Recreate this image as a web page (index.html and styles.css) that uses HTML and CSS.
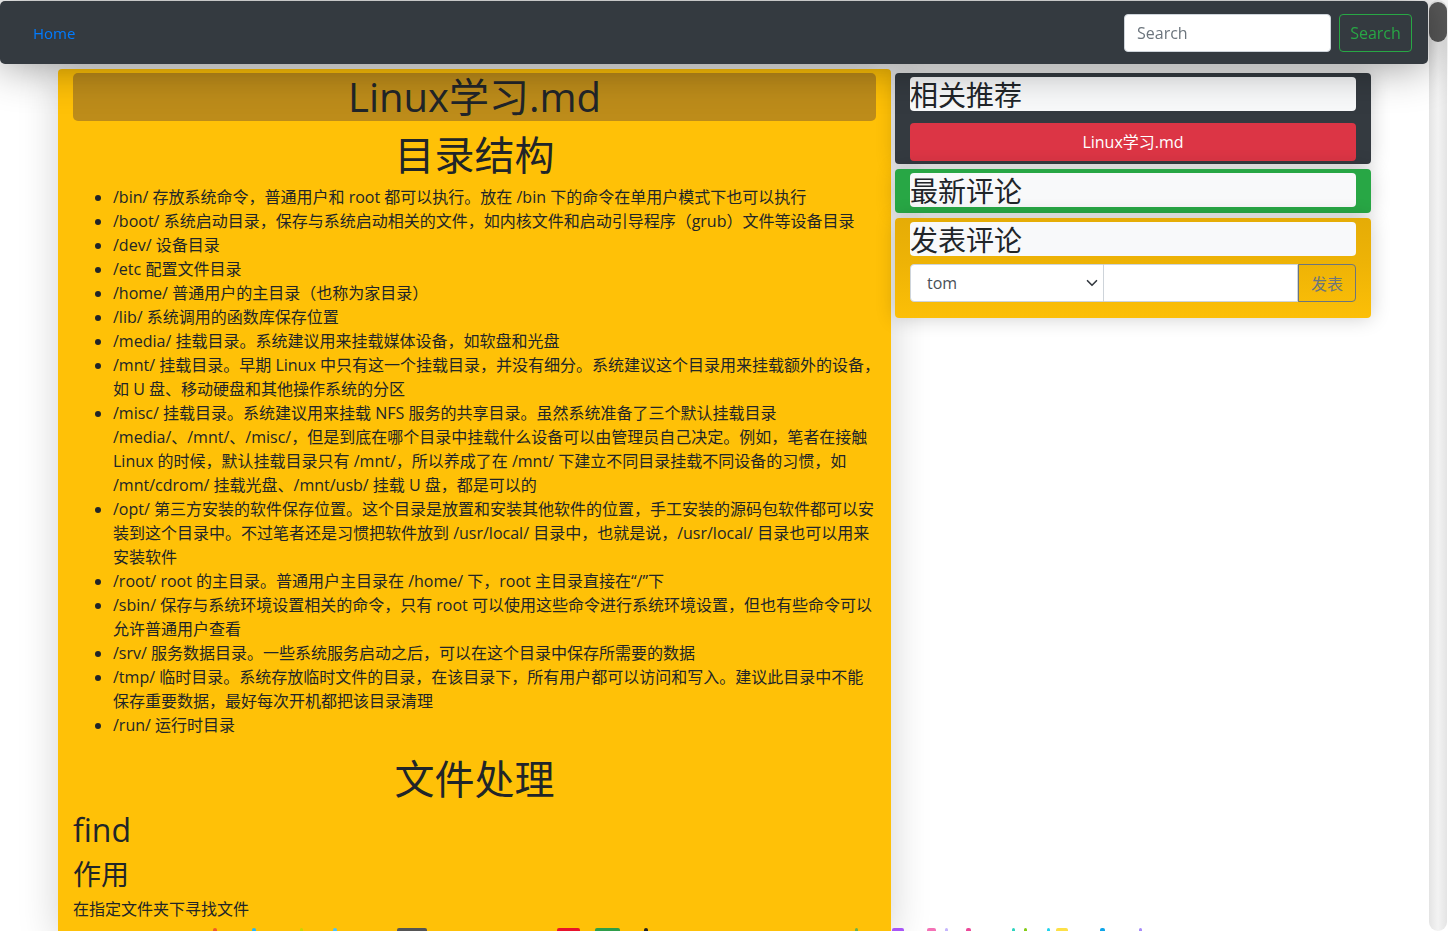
FILE: index.html
```html
<!DOCTYPE html>
<html lang="zh-CN">
<head>
<meta charset="utf-8">
<title>Linux学习.md</title>
<link rel="stylesheet" href="styles.css">
</head>
<body>
<nav class="navbar">
  <a class="home" href="#">Home</a>
  <form class="search">
    <input class="search-input" type="text" placeholder="Search">
    <button class="search-btn" type="button">Search</button>
  </form>
</nav>

<div class="layout">
  <main class="article">
    <h1 class="doc-title">Linux学习.md</h1>
    <h1 class="sec">目录结构</h1>
    <ul class="dirs">
      <li>/bin/ 存放系统命令，普通用户和 root 都可以执行。放在 /bin 下的命令在单用户模式下也可以执行</li>
      <li>/boot/ 系统启动目录，保存与系统启动相关的文件，如内核文件和启动引导程序（grub）文件等设备目录</li>
      <li>/dev/ 设备目录</li>
      <li>/etc 配置文件目录</li>
      <li>/home/ 普通用户的主目录（也称为家目录）</li>
      <li>/lib/ 系统调用的函数库保存位置</li>
      <li>/media/ 挂载目录。系统建议用来挂载媒体设备，如软盘和光盘</li>
      <li>/mnt/ 挂载目录。早期 Linux 中只有这一个挂载目录，并没有细分。系统建议这个目录用来挂载额外的设备，<br>如 U 盘、移动硬盘和其他操作系统的分区</li>
      <li>/misc/ 挂载目录。系统建议用来挂载 NFS 服务的共享目录。虽然系统准备了三个默认挂载目录<br>/media/、/mnt/、/misc/，但是到底在哪个目录中挂载什么设备可以由管理员自己决定。例如，笔者在接触<br>Linux 的时候，默认挂载目录只有 /mnt/，所以养成了在 /mnt/ 下建立不同目录挂载不同设备的习惯，如<br>/mnt/cdrom/ 挂载光盘、/mnt/usb/ 挂载 U 盘，都是可以的</li>
      <li>/opt/ 第三方安装的软件保存位置。这个目录是放置和安装其他软件的位置，手工安装的源码包软件都可以安<br>装到这个目录中。不过笔者还是习惯把软件放到 /usr/local/ 目录中，也就是说，/usr/local/ 目录也可以用来<br>安装软件</li>
      <li>/root/ root 的主目录。普通用户主目录在 /home/ 下，root 主目录直接在“/”下</li>
      <li>/sbin/ 保存与系统环境设置相关的命令，只有 root 可以使用这些命令进行系统环境设置，但也有些命令可以<br>允许普通用户查看</li>
      <li>/srv/ 服务数据目录。一些系统服务启动之后，可以在这个目录中保存所需要的数据</li>
      <li>/tmp/ 临时目录。系统存放临时文件的目录，在该目录下，所有用户都可以访问和写入。建议此目录中不能<br>保存重要数据，最好每次开机都把该目录清理</li>
      <li>/run/ 运行时目录</li>
    </ul>
    <h1 class="sec">文件处理</h1>
    <h2 class="cmd">find</h2>
    <h3 class="sub">作用</h3>
    <p class="para">在指定文件夹下寻找文件</p>
    <div class="peek">
      <span></span><span></span><span></span><span></span><span></span><span></span><span></span><span></span><span></span><span></span><span></span><span></span><span></span><span></span><span></span><span></span><span></span><span></span><span></span>
    </div>
  </main>

  <aside class="side">
    <section class="panel panel-dark">
      <h3 class="panel-title">相关推荐</h3>
      <a class="rec" href="#">Linux学习.md</a>
    </section>
    <section class="panel panel-green">
      <h3 class="panel-title">最新评论</h3>
    </section>
    <section class="panel panel-yellow">
      <h3 class="panel-title">发表评论</h3>
      <div class="input-group">
        <span class="select-wrap">
          <select class="user-select">
            <option>tom</option>
          </select>
          <svg class="chev" width="12" height="12" viewBox="0 0 16 16"><path d="M2 5l6 6 6-6" fill="none" stroke="#343a40" stroke-width="2.2" stroke-linecap="round" stroke-linejoin="round"/></svg>
        </span>
        <input class="comment-input" type="text">
        <button class="post-btn" type="button">发表</button>
      </div>
    </section>
  </aside>
</div>

<div class="scrollbar"><div class="thumb"></div></div>
</body>
</html>
```

FILE: styles.css
```css
html, body {
  margin: 0;
  padding: 0;
  height: 931px;
  overflow: hidden;
}

body {
  font-family: "Open Sans", "Noto Sans CJK SC", sans-serif;
  font-size: 16px;
  line-height: 24px;
  color: #212529;
  background: #fff;
}

/* ---------- navbar ---------- */
.navbar {
  position: relative;
  z-index: 5;
  margin: 1px 20px 0 0;
  height: 63px;
  box-sizing: border-box;
  background: #343a40;
  border-radius: 5px;
  display: flex;
  align-items: center;
  justify-content: space-between;
  padding: 0 16px 0 33px;
  box-shadow: 0 0 45px rgba(0, 0, 0, 0.45);
}

.home {
  color: #007bff;
  text-decoration: none;
  font-size: 15px;
}

.search {
  display: flex;
  gap: 8px;
  margin: 0;
}

.search-input {
  width: 207px;
  height: 38px;
  box-sizing: border-box;
  border: 1px solid #ced4da;
  border-radius: 4px;
  padding: 6px 12px;
  font: 16px "Open Sans", "Noto Sans CJK SC", sans-serif;
  color: #495057;
  background: #fff;
}

.search-input::placeholder {
  color: #6c757d;
}

.search-btn {
  width: 73px;
  height: 38px;
  box-sizing: border-box;
  border: 1px solid #28a745;
  border-radius: 4px;
  background: transparent;
  color: #28a745;
  font: 16px "Open Sans", "Noto Sans CJK SC", sans-serif;
  padding: 0;
}

/* ---------- layout ---------- */
.layout {
  display: flex;
  align-items: flex-start;
  gap: 4px;
  margin: 5px 0 0 58px;
}

.article {
  width: 833px;
  flex: none;
  box-sizing: border-box;
  padding: 4px 15px 0;
  background: #ffc107;
  border-radius: 4px;
  box-shadow: 0 0 40px rgba(0, 0, 0, 0.18);
}

.doc-title {
  margin: 0;
  height: 48px;
  line-height: 48px;
  font-size: 40px;
  font-weight: 400;
  text-align: center;
  background: #bd8c1a;
  border-radius: 5px;
}

.sec {
  margin: 10px 0 6px;
  font-size: 40px;
  line-height: 48px;
  font-weight: 400;
  text-align: center;
}

.dirs {
  margin: 0 0 18px;
  padding-left: 40px;
}

.dirs li {
  white-space: nowrap;
}

.cmd {
  margin: 8px 0 8px;
  font-size: 32px;
  line-height: 38px;
  font-weight: 500;
}

.sub {
  margin: 0 0 6px;
  font-size: 28px;
  line-height: 34px;
  font-weight: 400;
}

.para {
  margin: 0 0 7px;
}

.peek {
  display: flex;
  height: 12px;
}

.peek span {
  flex: none;
  height: 12px;
  width: 4px;
  border-radius: 2px 2px 0 0;
}

.peek span:nth-child(1)  { margin-left: 140px; background: #f05a28; }
.peek span:nth-child(2)  { margin-left: 35px;  background: #29b6f6; }
.peek span:nth-child(3)  { margin-left: 44px;  background: #c6d600; width: 3px; }
.peek span:nth-child(4)  { margin-left: 30px;  background: #4fc3f7; }
.peek span:nth-child(5)  { margin-left: 60px;  background: #555; width: 30px; }
.peek span:nth-child(6)  { margin-left: 130px; background: #e8132b; width: 23px; }
.peek span:nth-child(7)  { margin-left: 15px;  background: #2e9e4a; width: 25px; }
.peek span:nth-child(8)  { margin-left: 24px;  background: #222; }
.peek span:nth-child(9)  { margin-left: 207px; background: #6ab04c; width: 3px; }
.peek span:nth-child(10) { margin-left: 34px;  background: #a855f7; width: 12px; }
.peek span:nth-child(11) { margin-left: 23px;  background: #f472b6; width: 9px; }
.peek span:nth-child(12) { margin-left: 9px;   background: #c4b5fd; width: 3px; }
.peek span:nth-child(13) { margin-left: 18px;  background: #ec4899; width: 5px; }
.peek span:nth-child(14) { margin-left: 41px;  background: #2dd4bf; width: 3px; }
.peek span:nth-child(15) { margin-left: 9px;   background: #84cc16; width: 3px; }
.peek span:nth-child(16) { margin-left: 20px;  background: #22d3ee; width: 3px; }
.peek span:nth-child(17) { margin-left: 6px;   background: #fde047; width: 12px; }
.peek span:nth-child(18) { margin-left: 32px;  background: #0ea5e9; width: 5px; }
.peek span:nth-child(19) { margin-left: 34px;  background: #a78bfa; width: 3px; }

/* ---------- sidebar ---------- */
.side {
  width: 476px;
  flex: none;
  margin-top: 4px;
  display: flex;
  flex-direction: column;
  gap: 5px;
}

.panel {
  padding: 4px 15px;
  border-radius: 4px;
  box-shadow: 0 0 20px rgba(0, 0, 0, 0.2);
}

.panel-title {
  margin: 0;
  height: 34px;
  font-size: 28px;
  line-height: 36px;
  font-weight: 400;
  background: #f8f9fa;
  border-radius: 4px;
}

.panel-dark {
  background: #343a40;
  padding-bottom: 3px;
}

.rec {
  display: block;
  margin-top: 12px;
  height: 38px;
  line-height: 38px;
  background: #dc3545;
  color: #fff;
  text-align: center;
  text-decoration: none;
  border-radius: 4px;
}

.panel-green {
  background: #28a745;
  padding-bottom: 6px;
}

.panel-yellow {
  background: linear-gradient(180deg, #e5ac06 0%, #eeb306 45%, #fcbf07 100%);
  padding-bottom: 4px;
}

.input-group {
  display: flex;
  height: 38px;
  margin: 8px 0 12px;
}

.select-wrap {
  position: relative;
  width: 194px;
  flex: none;
}

.user-select {
  appearance: none;
  -webkit-appearance: none;
  width: 100%;
  height: 38px;
  box-sizing: border-box;
  border: 1px solid #ced4da;
  border-radius: 4px 0 0 4px;
  background: #fff;
  padding: 0 30px 0 16px;
  font: 16px "Open Sans", "Noto Sans CJK SC", sans-serif;
  color: #495057;
}

.chev {
  position: absolute;
  right: 6px;
  top: 13px;
  pointer-events: none;
}

.comment-input {
  flex: 1;
  min-width: 0;
  height: 38px;
  box-sizing: border-box;
  border: 1px solid #ced4da;
  border-left: none;
  background: #fff;
  font: 16px "Open Sans", "Noto Sans CJK SC", sans-serif;
}

.post-btn {
  width: 58px;
  flex: none;
  height: 38px;
  box-sizing: border-box;
  border: 1px solid #6c757d;
  border-radius: 0 4px 4px 0;
  background: transparent;
  color: #6c757d;
  font: 16px "Noto Sans CJK SC", sans-serif;
  padding: 0;
}

/* ---------- window scrollbar ---------- */
.scrollbar {
  position: fixed;
  top: 0;
  right: 1px;
  width: 18px;
  height: 931px;
  border-radius: 9px;
  background: linear-gradient(90deg, #e4e4e4, #f3f3f3 50%, #e4e4e4);
}

.thumb {
  margin-top: 2px;
  height: 40px;
  border-radius: 9px;
  background: #5b5b5b;
}
```
